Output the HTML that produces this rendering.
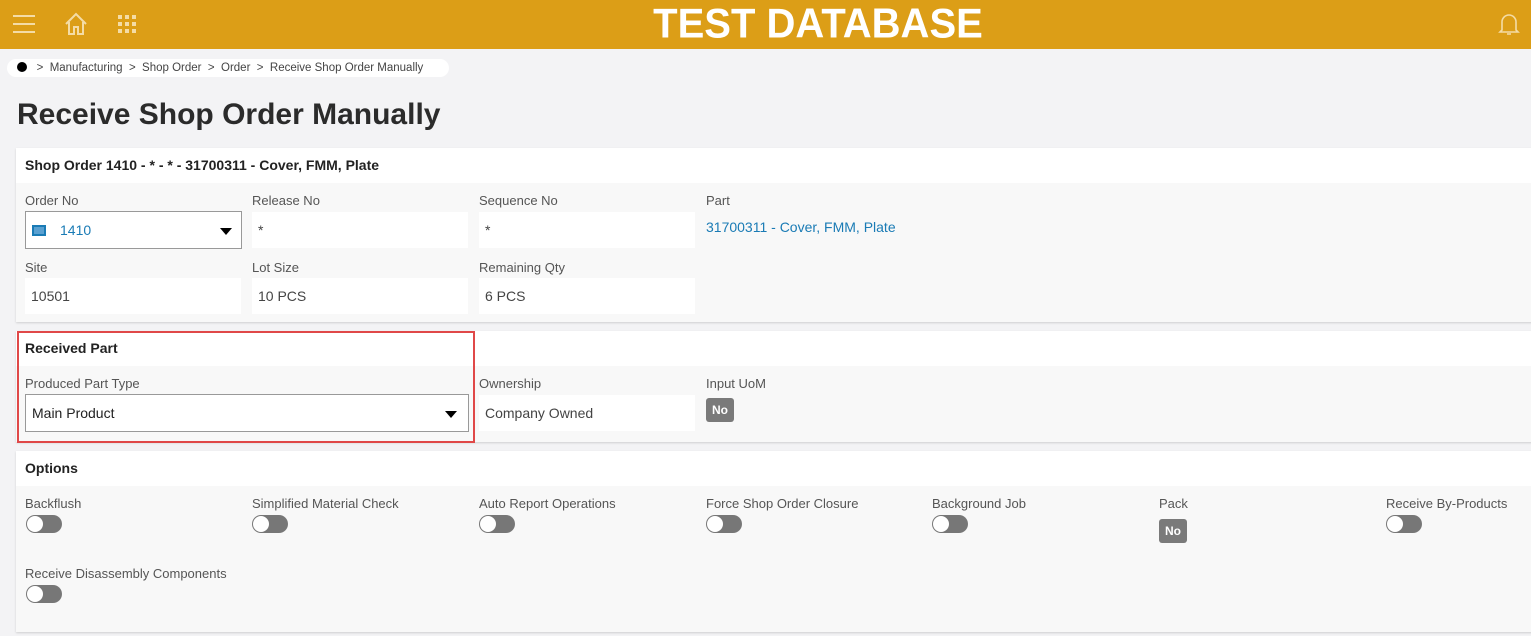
<!DOCTYPE html>
<html><head><style>
*{box-sizing:border-box;margin:0;padding:0}
body{width:1531px;height:636px;overflow:hidden;background:#f3f3f5;font-family:"Liberation Sans",sans-serif;color:#333;position:relative}
.a{position:absolute}
.hdr{left:0;top:0;width:1531px;height:49px;background:#dc9e17}
.card{left:16px;width:1520px;background:#f8f8f8;box-shadow:0 1px 2px rgba(0,0,0,.15)}
.ch{position:absolute;left:0;top:0;width:100%;height:35px;background:#fff;font-weight:bold;font-size:14px;padding:9px 9px;color:#222}
.lbl{font-size:13px;color:#555}
.box{background:#fff;height:36px;font-size:14px;padding:10px 6px;color:#444}
.tg{width:36px;height:18px;border-radius:9px;background:#777;position:absolute}
.tg:after{content:"";position:absolute;left:1px;top:1px;width:16px;height:16px;border-radius:50%;background:#fff}
.no{background:#7a7a7a;color:#fff;font-weight:bold;font-size:12px;width:28px;height:24px;border-radius:3px;text-align:center;line-height:24px}
</style></head><body>
<div class="a hdr"></div>
<svg class="a" style="left:13px;top:14px" width="22" height="20"><g stroke="#f4dca6" stroke-width="2"><line x1="0" y1="2" x2="22" y2="2"/><line x1="0" y1="10" x2="22" y2="10"/><line x1="0" y1="18" x2="22" y2="18"/></g></svg>
<svg class="a" style="left:64px;top:12px" width="24" height="24"><path d="M2 12 L12 2 L22 12 M5 10 V22 H10 V15 H14 V22 H19 V10" fill="none" stroke="#f4dca6" stroke-width="2"/></svg>
<svg class="a" style="left:118px;top:15px" width="19" height="19" fill="#f4dca6"><rect x="0" y="0" width="4" height="4"/><rect x="7" y="0" width="4" height="4"/><rect x="14" y="0" width="4" height="4"/><rect x="0" y="7" width="4" height="4"/><rect x="7" y="7" width="4" height="4"/><rect x="14" y="7" width="4" height="4"/><rect x="0" y="14" width="4" height="4"/><rect x="7" y="14" width="4" height="4"/><rect x="14" y="14" width="4" height="4"/></svg>
<div class="a" style="left:650px;top:1px;width:336px;text-align:center;font-size:40px;font-weight:bold;color:#fff;line-height:46px;transform:scaleY(1.05)">TEST DATABASE</div>
<svg class="a" style="left:1498px;top:12px" width="22" height="24"><path d="M4 18 V10 a7 7 0 0 1 14 0 V18 L20 20 H2 Z M9 22 H13" fill="none" stroke="#f4dca6" stroke-width="1.6"/></svg>
<div class="a" style="left:7px;top:59px;width:442px;height:18px;background:#fff;border-radius:9px;font-size:11.5px;color:#444;line-height:18px;padding-left:10px;white-space:nowrap"><span style="display:inline-block;width:10px;height:10px;border-radius:50%;background:#000;vertical-align:-1px"></span>&nbsp;&nbsp;&nbsp;&gt;&nbsp;&nbsp;Manufacturing&nbsp;&nbsp;&gt;&nbsp;&nbsp;Shop Order&nbsp;&nbsp;&gt;&nbsp;&nbsp;Order&nbsp;&nbsp;&gt;&nbsp;&nbsp;Receive Shop Order Manually</div>
<div class="a" style="left:17px;top:98px;font-size:30px;font-weight:bold;color:#2b2b2b">Receive Shop Order Manually</div>

<div class="a card" style="top:148px;height:174px">
<div class="ch">Shop Order 1410 - * - * - 31700311 - Cover, FMM, Plate</div>
</div>
<div class="a lbl" style="left:25px;top:193px">Order No</div>
<div class="a box" style="left:25px;top:211px;width:217px;height:38px;border:1px solid #999;color:#1a7bb5"><span style="display:inline-block;width:14px;height:11px;border:2px solid #1a7bb5;background:#5aa0d0;vertical-align:-1px;margin-right:14px"></span>1410<span style="position:absolute;right:9px;top:16px;border:6px solid transparent;border-top:7px solid #000;border-bottom:0"></span></div>
<div class="a lbl" style="left:252px;top:193px">Release No</div>
<div class="a box" style="left:252px;top:212px;width:216px">*</div>
<div class="a lbl" style="left:479px;top:193px">Sequence No</div>
<div class="a box" style="left:479px;top:212px;width:216px">*</div>
<div class="a lbl" style="left:706px;top:193px">Part</div>
<div class="a" style="left:706px;top:219px;font-size:14px;color:#1a7bb5">31700311 - Cover, FMM, Plate</div>
<div class="a lbl" style="left:25px;top:260px">Site</div>
<div class="a box" style="left:25px;top:278px;width:216px">10501</div>
<div class="a lbl" style="left:252px;top:260px">Lot Size</div>
<div class="a box" style="left:252px;top:278px;width:216px">10 PCS</div>
<div class="a lbl" style="left:479px;top:260px">Remaining Qty</div>
<div class="a box" style="left:479px;top:278px;width:216px">6 PCS</div>

<div class="a card" style="top:331px;height:111px">
<div class="ch">Received Part</div>
</div>
<div class="a lbl" style="left:25px;top:376px">Produced Part Type</div>
<div class="a box" style="left:25px;top:394px;width:444px;height:38px;border:1px solid #999;color:#222">Main Product<span style="position:absolute;right:11px;top:16px;border:6px solid transparent;border-top:7px solid #000;border-bottom:0"></span></div>
<div class="a" style="left:17px;top:331px;width:458px;height:112px;border:2px solid #e04848"></div>
<div class="a lbl" style="left:479px;top:376px">Ownership</div>
<div class="a box" style="left:479px;top:395px;width:216px">Company Owned</div>
<div class="a lbl" style="left:706px;top:376px">Input UoM</div>
<div class="a no" style="left:706px;top:398px">No</div>

<div class="a card" style="top:451px;height:181px">
<div class="ch">Options</div>
</div>
<div class="a lbl" style="left:25px;top:496px">Backflush</div>
<div class="a tg" style="left:26px;top:515px"></div>
<div class="a lbl" style="left:252px;top:496px">Simplified Material Check</div>
<div class="a tg" style="left:252px;top:515px"></div>
<div class="a lbl" style="left:479px;top:496px">Auto Report Operations</div>
<div class="a tg" style="left:479px;top:515px"></div>
<div class="a lbl" style="left:706px;top:496px">Force Shop Order Closure</div>
<div class="a tg" style="left:706px;top:515px"></div>
<div class="a lbl" style="left:932px;top:496px">Background Job</div>
<div class="a tg" style="left:932px;top:515px"></div>
<div class="a lbl" style="left:1159px;top:496px">Pack</div>
<div class="a no" style="left:1159px;top:519px">No</div>
<div class="a lbl" style="left:1386px;top:496px">Receive By-Products</div>
<div class="a tg" style="left:1386px;top:515px"></div>
<div class="a lbl" style="left:25px;top:566px">Receive Disassembly Components</div>
<div class="a tg" style="left:26px;top:585px"></div>
</body></html>
